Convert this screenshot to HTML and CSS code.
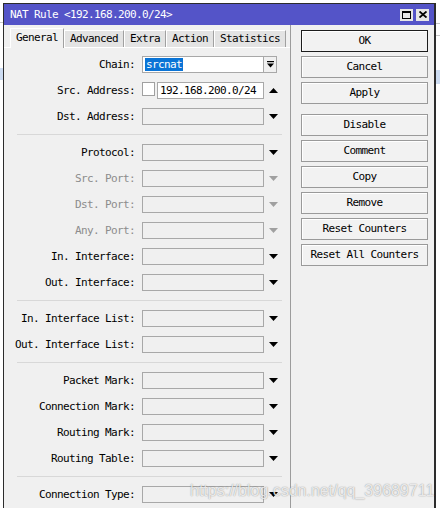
FILE: index.html
```html
<!DOCTYPE html>
<html>
<head>
<meta charset="utf-8">
<link rel="stylesheet" href="styles.css">
</head>
<body>
<div class="screen">
  <div class="bg-left">
    <div class="bg-line"></div>
    <div class="bg-hl"></div>
  </div>
  <div class="window">
    <div class="titlebar">
      <span class="title">NAT Rule &lt;192.168.200.0/24&gt;</span>
      <div class="tb-btns">
        <span class="tb-btn"><svg width="9" height="8" viewBox="0 0 9 8"><rect x="0.5" y="0.5" width="8" height="7" fill="none" stroke="#000"/><rect x="0" y="0" width="9" height="2" fill="#000"/></svg></span>
        <span class="tb-btn"><svg width="8" height="7" viewBox="0 0 8 7"><path d="M0.5 0.5L7.5 6.5M7.5 0.5L0.5 6.5" stroke="#000" stroke-width="1.8" fill="none"/></svg></span>
      </div>
    </div>
    <div class="body">
      <div class="left">
        <div class="tabs">
          <span class="tab active">General</span>
          <span class="tab">Advanced</span>
          <span class="tab">Extra</span>
          <span class="tab">Action</span>
          <span class="tab">Statistics</span>
        </div>
        <div class="form">
          <div class="row">
            <span class="lbl">Chain:</span>
            <div class="field white chain"><span class="sel">srcnat</span></div>
            <span class="combo-btn"><svg width="7" height="7" viewBox="0 0 7 7"><rect x="0" y="0" width="7" height="1.2" fill="#000"/><path d="M0 2.5h7L3.5 6.5z" fill="#000"/></svg></span>
          </div>
          <div class="row">
            <span class="lbl">Src. Address:</span>
            <span class="chk"></span>
            <div class="field white src">192.168.200.0/24</div>
            <span class="arr"><svg width="9" height="5" viewBox="0 0 9 5"><path d="M0 5h9L4.5 0z" fill="#000"/></svg></span>
          </div>
          <div class="row">
            <span class="lbl">Dst. Address:</span>
            <div class="field"></div>
            <span class="arr"><svg width="9" height="5" viewBox="0 0 9 5"><path d="M0 0h9L4.5 5z" fill="#000"/></svg></span>
          </div>
          <div class="sep"></div>
          <div class="row">
            <span class="lbl">Protocol:</span>
            <div class="field"></div>
            <span class="arr"><svg width="9" height="5" viewBox="0 0 9 5"><path d="M0 0h9L4.5 5z" fill="#000"/></svg></span>
          </div>
          <div class="row dis">
            <span class="lbl">Src. Port:</span>
            <div class="field"></div>
            <span class="arr"><svg width="9" height="5" viewBox="0 0 9 5"><path d="M0 0h9L4.5 5z" fill="#a0a0a0"/></svg></span>
          </div>
          <div class="row dis">
            <span class="lbl">Dst. Port:</span>
            <div class="field"></div>
            <span class="arr"><svg width="9" height="5" viewBox="0 0 9 5"><path d="M0 0h9L4.5 5z" fill="#a0a0a0"/></svg></span>
          </div>
          <div class="row dis">
            <span class="lbl">Any. Port:</span>
            <div class="field"></div>
            <span class="arr"><svg width="9" height="5" viewBox="0 0 9 5"><path d="M0 0h9L4.5 5z" fill="#a0a0a0"/></svg></span>
          </div>
          <div class="row">
            <span class="lbl">In. Interface:</span>
            <div class="field"></div>
            <span class="arr"><svg width="9" height="5" viewBox="0 0 9 5"><path d="M0 0h9L4.5 5z" fill="#000"/></svg></span>
          </div>
          <div class="row">
            <span class="lbl">Out. Interface:</span>
            <div class="field"></div>
            <span class="arr"><svg width="9" height="5" viewBox="0 0 9 5"><path d="M0 0h9L4.5 5z" fill="#000"/></svg></span>
          </div>
          <div class="sep"></div>
          <div class="row">
            <span class="lbl">In. Interface List:</span>
            <div class="field"></div>
            <span class="arr"><svg width="9" height="5" viewBox="0 0 9 5"><path d="M0 0h9L4.5 5z" fill="#000"/></svg></span>
          </div>
          <div class="row">
            <span class="lbl">Out. Interface List:</span>
            <div class="field"></div>
            <span class="arr"><svg width="9" height="5" viewBox="0 0 9 5"><path d="M0 0h9L4.5 5z" fill="#000"/></svg></span>
          </div>
          <div class="sep"></div>
          <div class="row">
            <span class="lbl">Packet Mark:</span>
            <div class="field"></div>
            <span class="arr"><svg width="9" height="5" viewBox="0 0 9 5"><path d="M0 0h9L4.5 5z" fill="#000"/></svg></span>
          </div>
          <div class="row">
            <span class="lbl">Connection Mark:</span>
            <div class="field"></div>
            <span class="arr"><svg width="9" height="5" viewBox="0 0 9 5"><path d="M0 0h9L4.5 5z" fill="#000"/></svg></span>
          </div>
          <div class="row">
            <span class="lbl">Routing Mark:</span>
            <div class="field"></div>
            <span class="arr"><svg width="9" height="5" viewBox="0 0 9 5"><path d="M0 0h9L4.5 5z" fill="#000"/></svg></span>
          </div>
          <div class="row">
            <span class="lbl">Routing Table:</span>
            <div class="field"></div>
            <span class="arr"><svg width="9" height="5" viewBox="0 0 9 5"><path d="M0 0h9L4.5 5z" fill="#000"/></svg></span>
          </div>
          <div class="sep"></div>
          <div class="row">
            <span class="lbl">Connection Type:</span>
            <div class="field"></div>
            <span class="arr"><svg width="9" height="5" viewBox="0 0 9 5"><path d="M0 0h9L4.5 5z" fill="#000"/></svg></span>
          </div>
        </div>
      </div>
      <div class="right">
        <div class="btn default">OK</div>
        <div class="btn">Cancel</div>
        <div class="btn">Apply</div>
        <div class="btn-gap"></div>
        <div class="btn">Disable</div>
        <div class="btn">Comment</div>
        <div class="btn">Copy</div>
        <div class="btn">Remove</div>
        <div class="btn">Reset Counters</div>
        <div class="btn">Reset All Counters</div>
      </div>
    </div>
    <div class="watermark">https://blog.csdn.net/qq_39689711</div>
  </div>
  <div class="bg-right">
    <div class="bg-line r1"></div>
    <div class="bg-line r2"></div>
    <div class="bg-hl r3"></div>
  </div>
</div>
</body>
</html>
```

FILE: styles.css
```css
html, body {
  margin: 0;
  padding: 0;
}
body {
  background: #ffffff;
  font-family: "DejaVu Sans Mono", "Liberation Mono", monospace;
  font-size: 11px;
  letter-spacing: -0.62px;
  color: #000;
}
.screen {
  display: flex;
  width: 440px;
  height: 508px;
  overflow: hidden;
  padding-top: 3px;
  box-sizing: border-box;
}
.bg-left {
  width: 3px;
  flex: none;
}
.bg-line {
  height: 1px;
  background: #c8c8c8;
  margin-top: 19px;
}
.bg-hl {
  height: 12px;
  background: #cddcf2;
  margin-top: 45px;
}
.bg-right {
  width: 4px;
  flex: none;
}
.bg-line.r1 {
  margin-top: 20px;
}
.bg-line.r2 {
  margin-top: 11px;
}
.bg-hl.r3 {
  margin-top: 34px;
  height: 14px;
}
.window {
  width: 433px;
  height: 520px;
  flex: none;
  box-sizing: border-box;
  border: 1px solid #2c2c2c;
  border-right-width: 2px;
  background: #f0f0f0;
  position: relative;
}
.titlebar {
  height: 21px;
  background: #5454c8;
  color: #fff;
  display: flex;
  align-items: center;
  justify-content: space-between;
  padding: 0 5px 0 6px;
}
.title {
  line-height: 21px;
}
.tb-btns {
  display: flex;
  gap: 3px;
}
.tb-btn {
  width: 13px;
  height: 12px;
  background: #e6e6e6;
  display: flex;
  align-items: center;
  justify-content: center;
}
.tb-btn svg {
  display: block;
}
.body {
  display: flex;
}
.left {
  width: 287px;
  flex: none;
  box-sizing: border-box;
  border-right: 1px solid #9c9c9c;
  min-height: 500px;
}
.tabs {
  height: 22px;
  display: flex;
  align-items: flex-end;
  padding-left: 6px;
}
.tab {
  height: 17px;
  box-sizing: border-box;
  padding: 0 5px;
  border-top: 1px solid #ffffff;
  border-left: 1px solid #ffffff;
  border-right: 1px solid #a0a0a0;
  background: #e3e3e3;
  line-height: 16px;
}
.tab.active {
  height: 20px;
  background: #f0f0f0;
  margin-bottom: -1px;
  position: relative;
  line-height: 17px;
}
.form {
  border-top: 1px solid #ffffff;
  padding-top: 4px;
}
.row {
  height: 26px;
  box-sizing: border-box;
  padding-top: 4px;
  display: flex;
  align-items: flex-start;
}
.lbl {
  width: 131px;
  margin-right: 7px;
  text-align: right;
  line-height: 17px;
  white-space: nowrap;
}
.row.dis .lbl {
  color: #8c8c8c;
}
.field {
  width: 122px;
  height: 17px;
  box-sizing: border-box;
  border: 1px solid #a8a8a8;
  background: #f0f0f0;
  line-height: 15px;
  white-space: nowrap;
  overflow: hidden;
}
.field.white {
  background: #ffffff;
}
.field.chain {
  padding-left: 2px;
}
.sel {
  background: #0a74d6;
  color: #fff;
  padding: 0 1px;
}
.combo-btn {
  width: 13px;
  height: 17px;
  box-sizing: border-box;
  border: 1px solid #a8a8a8;
  border-left: none;
  background: #f0f0f0;
  display: flex;
  align-items: center;
  justify-content: center;
}
.chk {
  width: 13px;
  height: 14px;
  box-sizing: border-box;
  border: 1px solid #a0a0a0;
  background: #fff;
  margin-right: 2px;
}
.field.src {
  width: 107px;
  padding-left: 2px;
}
.arr {
  width: 18px;
  height: 17px;
  display: flex;
  align-items: center;
  justify-content: center;
}
.arr svg, .combo-btn svg {
  display: block;
}
.sep {
  height: 1px;
  background: #d8d8d8;
  margin: 4px 8px 5px 13px;
}
.right {
  flex: 1;
  padding: 5px 0 0 10px;
}
.btn {
  width: 127px;
  height: 22px;
  box-sizing: border-box;
  border: 1px solid #9a9a9a;
  box-shadow: inset 1px 1px 0 #ffffff;
  background: #f2f2f2;
  text-align: center;
  line-height: 20px;
  margin-bottom: 4px;
}
.btn.default {
  border-color: #1c1c1c;
}
.btn-gap {
  height: 6px;
}
.watermark {
  position: absolute;
  left: 186px;
  top: 478px;
  font-family: "Liberation Sans", Arial, sans-serif;
  font-size: 16px;
  letter-spacing: 0;
  color: rgba(255, 255, 255, 0.8);
  text-shadow: 0 0 1px rgba(0, 0, 0, 0.35), 0 0 2px rgba(0, 0, 0, 0.15);
  white-space: nowrap;
}
```
